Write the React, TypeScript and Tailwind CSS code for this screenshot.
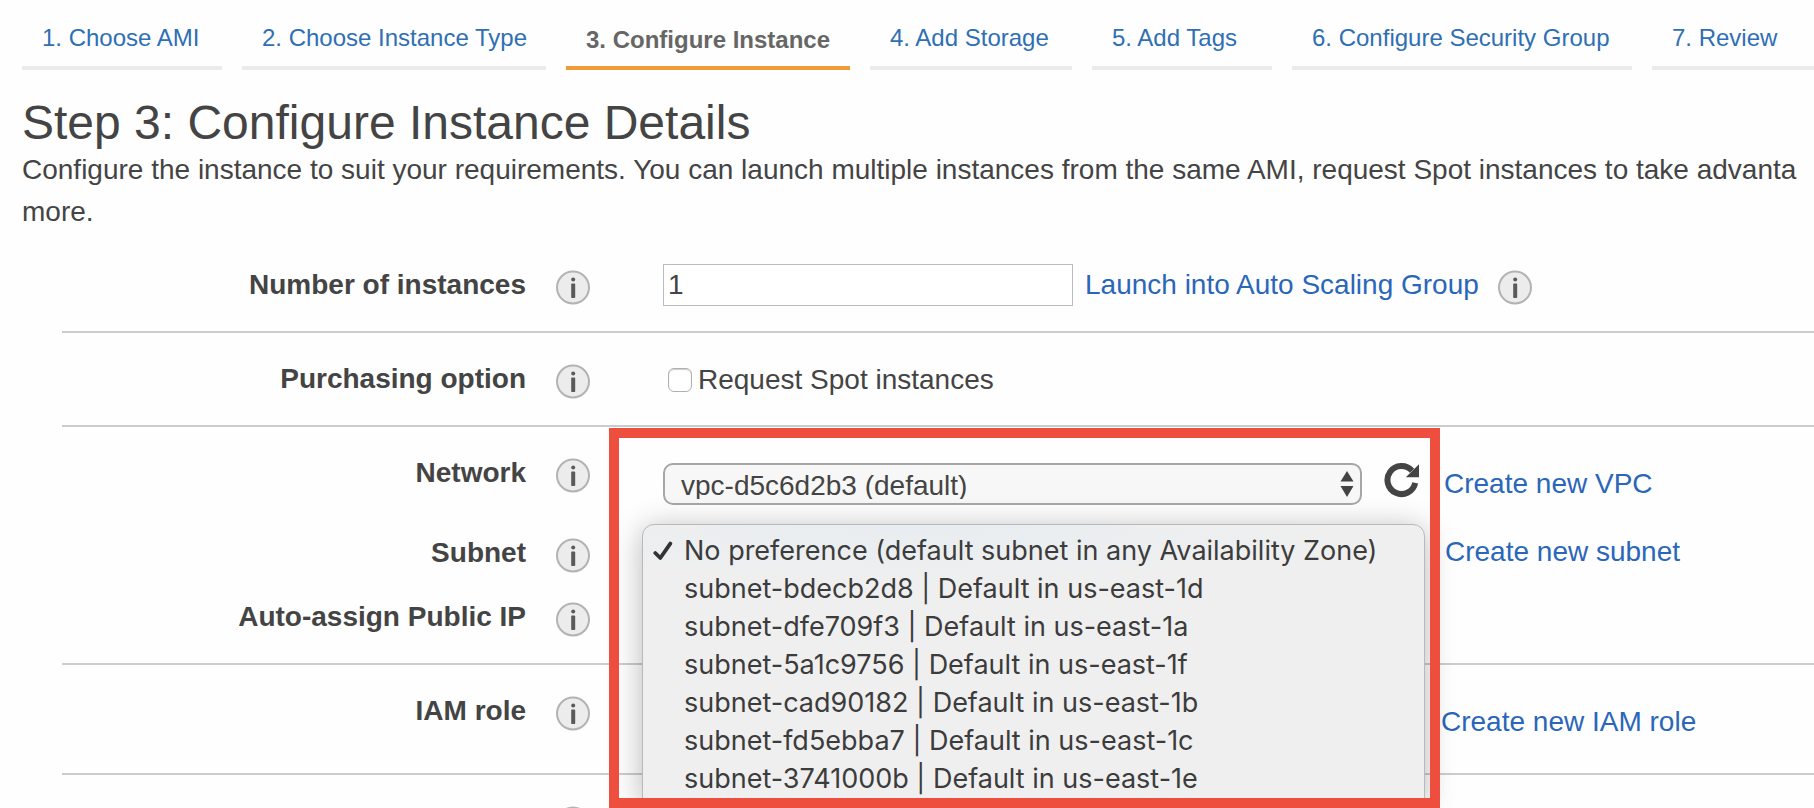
import React from "react";

const steps = [
  { name: "1. Choose AMI", width: "w-[200px]" },
  { name: "2. Choose Instance Type", width: "w-[304px]" },
  { name: "3. Configure Instance", width: "w-[284px]" },
  { name: "4. Add Storage", width: "w-[202px]" },
  { name: "5. Add Tags", width: "w-[180px]" },
  { name: "6. Configure Security Group", width: "w-[340px]" },
  { name: "7. Review", width: "flex-1" },
];
const activeStep = 2;

const subnets = [
  "No preference (default subnet in any Availability Zone)",
  "subnet-bdecb2d8 | Default in us-east-1d",
  "subnet-dfe709f3 | Default in us-east-1a",
  "subnet-5a1c9756 | Default in us-east-1f",
  "subnet-cad90182 | Default in us-east-1b",
  "subnet-fd5ebba7 | Default in us-east-1c",
  "subnet-3741000b | Default in us-east-1e",
];

function InfoButton({ topic }: { topic: string }) {
  return (
    <button type="button" aria-label={topic} className="block size-9 shrink-0">
      <svg viewBox="0 0 36 36" className="size-9" aria-hidden="true">
        <circle cx="18" cy="17.5" r="16" fill="#ececec" stroke="#b3b3b3" strokeWidth="2" />
        <circle cx="18.2" cy="9.6" r="2" fill="#5a5a5a" />
        <rect x="16.2" y="13.6" width="4" height="14.4" rx="0.8" fill="#5a5a5a" />
      </svg>
    </button>
  );
}

function Row({
  id,
  label,
  height,
  children,
}: {
  id?: string;
  label?: string;
  height: string;
  children?: React.ReactNode;
}) {
  return (
    <div className={`flex items-start ${height}`}>
      <div className="flex w-[529px] shrink-0 items-start justify-end gap-[29px] pt-[31px]">
        {label && (
          <label htmlFor={id} className="font-bold leading-[30px] whitespace-nowrap">
            {label}
          </label>
        )}
        <InfoButton topic={label ? `About ${label}` : "More information"} />
      </div>
      <div className="min-w-0 flex-1 pl-[72px]">{children}</div>
    </div>
  );
}

function Link({ children, className = "" }: { children: React.ReactNode; className?: string }) {
  return (
    <a href="#" className={`whitespace-nowrap leading-7 text-[#2a66b9] ${className}`}>
      {children}
    </a>
  );
}

export default function App() {
  return (
    <div className="h-screen overflow-hidden bg-[#fefefe] pl-[22px] font-['Liberation_Sans',Arial,sans-serif] text-[28px] text-[#444]">
      <nav aria-label="Wizard steps" className="flex gap-5 text-2xl leading-7">
        {steps.map((step, i) => (
          <a
            key={step.name}
            href="#"
            aria-current={i === activeStep ? "step" : undefined}
            className={`${step.width} ${
              i === activeStep
                ? "shrink-0 border-b-4 border-[#f09b38] pt-[26px] pb-3 pl-5 font-bold whitespace-nowrap text-[#666]"
                : "shrink-0 border-b-4 border-[#ebebeb] pt-6 pb-3.5 pl-5 whitespace-nowrap text-[#2f6fb4]"
            }`}
          >
            {step.name}
          </a>
        ))}
      </nav>

      <h1 className="mt-[27px] text-5xl leading-[52px]">Step 3: Configure Instance Details</h1>
      <p className="leading-[42px] whitespace-nowrap">
        Configure the instance to suit your requirements. You can launch multiple instances from the
        same AMI, request Spot instances to take advanta
        <br />
        more.
      </p>

      <form className="mt-1.5 pl-10">
        <section className="border-b-2 border-[#ccc]">
          <Row id="count" label="Number of instances" height="h-[92px]">
            <div className="flex items-center pt-[25px]">
              <input
                id="count"
                type="text"
                defaultValue="1"
                className="h-[42px] w-[410px] border border-[#bbb] bg-white px-1 outline-none"
              />
              <Link className="ml-3">Launch into Auto Scaling Group</Link>
              <div className="ml-[18px] self-end">
                <InfoButton topic="About Auto Scaling" />
              </div>
            </div>
          </Row>
        </section>

        <section className="border-b-2 border-[#ccc]">
          <Row id="spot" label="Purchasing option" height="h-[92px]">
            <div className="flex items-center pt-8 pl-[5px]">
              <input
                id="spot"
                type="checkbox"
                className="size-6 appearance-none rounded-md border border-[#b0b0b0] bg-white shadow-[inset_0_1px_1px_#ccc]"
              />
              <label htmlFor="spot" className="pl-1.5 leading-[30px]">
                Request Spot instances
              </label>
            </div>
          </Row>
        </section>

        <section className="relative border-b-2 border-[#ccc]">
          <Row id="network" label="Network" height="h-20">
            <div className="flex items-center pt-9">
              <div className="relative">
                <select
                  id="network"
                  className="block h-[42px] w-[699px] appearance-none rounded-[10px] border-2 border-[#a6a6a6] bg-[#f7f7f7] pb-1 pl-4 outline-none"
                >
                  <option>vpc-d5c6d2b3 (default)</option>
                </select>
                <svg
                  viewBox="0 0 14 26"
                  className="pointer-events-none absolute top-2 right-2 h-[26px] w-3.5"
                  aria-hidden="true"
                >
                  <path d="M7 0 13.5 10.5H.5zM7 26 .5 15H13.5z" fill="#444" />
                </svg>
              </div>
              <button type="button" aria-label="Refresh" className="ml-[22px] self-start">
                <svg viewBox="0 0 36 36" className="block size-9" aria-hidden="true">
                  <path
                    d="M31.2 19.9A14 14 0 1 1 28 7.8"
                    fill="none"
                    stroke="#444"
                    strokeWidth="6"
                  />
                  <path d="M35 1.2V14.2H21.8z" fill="#444" />
                </svg>
              </button>
              <Link className="ml-6">Create new VPC</Link>
            </div>
          </Row>

          <Row id="subnet" label="Subnet" height="h-16">
            <div className="flex items-start pt-[31px]">
              <div className="relative h-7 w-[782px] shrink-0">
                <ul
                  id="subnet"
                  role="listbox"
                  aria-label="Subnet"
                  className="absolute -top-3.5 -left-[21px] w-[783px] rounded-t-xl border border-[#b9b9b9] bg-[#efefef] bg-[radial-gradient(ellipse_420px_60px_at_35%_0,#e8edf1,#efefef)] bg-no-repeat pt-[7px] pb-1 font-[Inter,sans-serif] text-[27px] leading-[38px] text-[#3c3c3c] shadow-[0_4px_30px_rgba(0,0,0,0.28)]"
                >
                  {subnets.map((subnet, i) => (
                    <li
                      key={subnet}
                      role="option"
                      aria-selected={i === 0}
                      className="flex items-center whitespace-nowrap pl-2.5"
                    >
                      <span className="w-[31px] shrink-0">
                        {i === 0 && (
                          <svg viewBox="0 0 20 20" className="size-5" aria-hidden="true">
                            <path
                              d="M2.3 12 7.3 17 17.3 2.6"
                              fill="none"
                              stroke="#333"
                              strokeWidth="3.8"
                              strokeLinecap="round"
                              strokeLinejoin="round"
                            />
                          </svg>
                        )}
                      </span>
                      {subnet}
                    </li>
                  ))}
                </ul>
              </div>
              <Link>Create new subnet</Link>
            </div>
          </Row>

          <Row label="Auto-assign Public IP" height="h-[92px]" />

          {/* Highlight around the network and subnet pickers */}
          <div className="pointer-events-none absolute top-px left-[547px] z-10 h-[380px] w-[831px] border-[10px] border-[#ee4e3e]" />
        </section>

        <section className="border-b-2 border-[#ccc]">
          <Row label="IAM role" height="h-[108px]">
            <div className="flex h-[78px] items-center pt-9 pl-[778px]">
              <Link>Create new IAM role</Link>
            </div>
          </Row>
        </section>

        <Row height="h-[92px]" />
      </form>
    </div>
  );
}
